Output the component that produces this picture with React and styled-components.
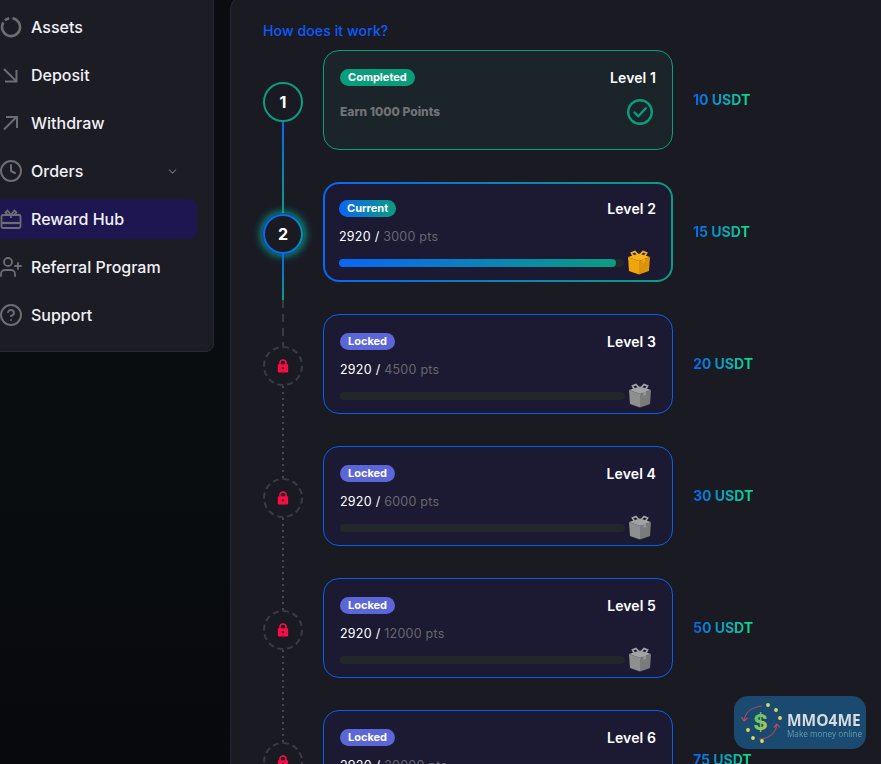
import React from 'react';
import styled, { createGlobalStyle } from 'styled-components';
import { ChevronDown, Clock, UserPlus, CircleHelp } from 'lucide-react';

const GlobalStyle = createGlobalStyle`
  html, body {
    margin: 0;
    height: 100%;
    overflow: hidden;
    background: #090c0f;
    font-family: Inter, "Liberation Sans", sans-serif;
  }
  * { box-sizing: border-box; }
`;

const Page = styled.div`
  display: flex;
  align-items: flex-start;
  gap: 16px;
  height: 764px;
  overflow: hidden;
  background: linear-gradient(180deg, #0a0c0f 0%, #0a0d10 60%, #07090c 100%);
`;

const Sidebar = styled.nav`
  flex: none;
  width: 230px;
  margin: -14px 0 0 -16px;
  padding: 16px 16px 16px 0;
  background: #1b1c24;
  border: 1px solid #272836;
  border-radius: 8px;
`;

const NavItem = styled.div`
  display: flex;
  align-items: center;
  gap: 8px;
  height: 40px;
  margin-top: ${({ $first }) => ($first ? '4px' : '8px')};
  padding: 0 16px 0 14px;
  border-radius: 0 8px 8px 0;
  background: ${({ $active }) => ($active ? '#1d1650' : 'transparent')};
  color: #f1f1f6;
  font-size: 16px;
  font-weight: 500;
  svg { flex: none; color: #6c6d72; }
`;

const NavLabel = styled.span`
  flex: 1;
`;

const Caret = styled(ChevronDown)`
  margin-right: 2px;
`;

const Panel = styled.main`
  flex: none;
  width: 680px;
  height: 900px;
  margin-top: -6px;
  padding: 26px 0 0 32px;
  background: #1a1a23;
  border: 1px solid #262735;
  border-right: 0;
  border-radius: 16px 0 0 0;
`;

const HowLink = styled.a`
  display: block;
  height: 20px;
  margin-bottom: 9px;
  color: #0a5cff;
  font-size: 14px;
  font-weight: 500;
  line-height: 20px;
  letter-spacing: 0.12px;
`;

const Row = styled.div`
  display: flex;
  align-items: flex-start;
  gap: 20px;
  height: 132px;
`;

/* taller than the row: the connector runs down to the next step's circle */
const StepCol = styled.div`
  display: flex;
  flex-direction: column;
  align-items: center;
  flex: none;
  width: 40px;
  height: 164px;
  padding-top: 32px;
`;

const Circle = styled.div`
  display: flex;
  align-items: center;
  justify-content: center;
  flex: none;
  width: 40px;
  height: 40px;
  border-radius: 50%;
  color: #fff;
  font-size: 16px;
  font-weight: 700;
  background: ${({ $kind }) =>
    $kind === 'current'
      ? 'linear-gradient(#1a1a23, #1a1a23) padding-box, linear-gradient(90deg, #0a66f5, #0a70e0 70%, #0a9d90) border-box'
      : '#1a1a23'};
  border: ${({ $kind }) =>
    $kind === 'done' ? '2px solid #0a9d80' : $kind === 'current' ? '2px solid transparent' : '2px dashed #3a3b42'};
  box-shadow: ${({ $kind }) =>
    $kind === 'current' ? '0 0 0 1px #0a4a90, 0 0 8px 2px #08a891' : 'none'};
`;

const Solid = styled.div`
  flex: 1;
  width: 2px;
  background: linear-gradient(180deg, #0a66ee 0%, #0a9d80 100%);
`;

const Dashed = styled.div`
  flex: 1;
  width: 2px;
  background: repeating-linear-gradient(180deg, #3a3b42 0 8px, transparent 8px 14px);
`;

const Dotted = styled.div`
  flex: 1;
  width: 2px;
  background: repeating-linear-gradient(180deg, #45464d 0 2px, transparent 2px 6px);
`;

const Card = styled.div`
  flex: none;
  width: 350px;
  height: 100px;
  border-radius: 16px;
  padding: ${({ $kind }) => ($kind === 'current' ? '16px 14px 0' : '18px 15px 0 16px')};
  border: ${({ $kind }) => ($kind === 'current' ? '2px solid transparent' : '1px solid')};
  border-color: ${({ $kind }) => ($kind === 'done' ? '#0a9d80' : $kind === 'locked' ? '#0a5fe6' : 'transparent')};
  background: ${({ $kind }) =>
    $kind === 'done'
      ? '#1b2429'
      : $kind === 'current'
        ? 'linear-gradient(#1c1a33, #1c1a33) padding-box, linear-gradient(90deg, #0a66f5, #0a9d80) border-box'
        : '#1c1a33'};
`;

const CardTop = styled.div`
  display: flex;
  align-items: center;
  justify-content: space-between;
  height: 17px;
`;

const Badge = styled.span`
  padding: 0 8px;
  border-radius: 9px;
  color: #fff;
  font-size: 11px;
  font-weight: 700;
  line-height: 17px;
  background: ${({ $kind }) =>
    $kind === 'done' ? '#0a9d7b' : $kind === 'current' ? 'linear-gradient(90deg, #0a66f5, #0a9d80)' : '#5b66d9'};
`;

const Level = styled.span`
  margin-right: 1px;
  color: #fff;
  font-size: 14px;
  font-weight: 600;
  letter-spacing: 0.1px;
`;

const EarnRow = styled.div`
  display: flex;
  align-items: center;
  justify-content: space-between;
  margin-top: 13px;
  padding-right: 4px;
  color: #6f7378;
  font-size: 12px;
  font-weight: 800;
  span { margin-top: -2px; }
`;

const Points = styled.div`
  margin-top: 12px;
  color: #fff;
  font-size: 12.5px;
  font-weight: 400;
  line-height: 16px;
  letter-spacing: 0.25px;
  span {
    color: #66676e;
  }
`;

const BarRow = styled.div`
  display: flex;
  align-items: center;
  gap: 3px;
  height: 25px;
  margin-top: 5px;
`;

const Track = styled.div`
  flex: none;
  width: 285px;
  height: 8px;
  border-radius: 4px;
  background: #22272c;
`;

const Fill = styled.div`
  height: 100%;
  border-radius: 4px;
  background: linear-gradient(90deg, #0a66f5, #0a9d80);
`;

const Reward = styled.div`
  height: 100px;
  line-height: 100px;
  font-size: 14px;
  font-weight: 700;
  background: linear-gradient(90deg, #0a62f0, #0ae08a);
  -webkit-background-clip: text;
  background-clip: text;
  color: transparent;
  white-space: nowrap;
`;

const LogoBadge = styled.div`
  position: fixed;
  left: 734px;
  top: 696px;
  display: flex;
  align-items: center;
  gap: 3px;
  width: 132px;
  height: 53px;
  padding-left: 4px;
  border-radius: 14px;
  background: #1a4a70;
  svg { flex: none; }
`;

const LogoText = styled.div`
  display: flex;
  flex-direction: column;
  padding-top: 5px;
  color: #d5dce2;
  font-family: "Open Sans", Inter, sans-serif;
  font-size: 15.5px;
  font-weight: 700;
  line-height: 16px;
  white-space: nowrap;
  small {
    color: #5f9cab;
    font-size: 8.2px;
    font-weight: 400;
    line-height: 11px;
  }
`;

const AssetsIcon = () => (
  <svg width="24" height="24" viewBox="-1 -1 24 24" fill="none" stroke="currentColor" strokeWidth="2.6">
    <path d="M12.5 2.2a9 9 0 1 1-9.2 4.300" />
    <path d="M4.800 4.400a9 9 0 0 1 4.400-2.200" />
  </svg>
);

const ArrowIn = () => (
  <svg width="24" height="24" viewBox="-1 -1 24 24" fill="none" stroke="currentColor" strokeWidth="2">
    <path d="M4 5 16 17M16.500 6v11.500H5" />
  </svg>
);

const ArrowOut = () => (
  <svg width="24" height="24" viewBox="-1 -1 24 24" fill="none" stroke="currentColor" strokeWidth="2">
    <path d="M4 17.500 16 5.500M6 5h11v11" />
  </svg>
);

const HubIcon = () => (
  <svg width="24" height="24" viewBox="-1 -1 24 24" fill="none" stroke="currentColor" strokeWidth="1.800">
    <rect x="1.500" y="7" width="19" height="13" rx="1.500" />
    <path d="M1.500 15h19" strokeWidth="2.200" />
    <path d="M11 7 7.500 2.500 5.500 4.500 8 7M11 7l3.500-4.500 2 2L14 7M11 7v3" />
  </svg>
);

const CheckIcon = () => (
  <svg width="26" height="26" viewBox="0 0 26 26" fill="none" stroke="#0a9d80" strokeWidth="2.400" strokeLinecap="round" strokeLinejoin="round">
    <circle cx="13" cy="13" r="11.800" />
    <path d="m7.500 13.500 3.800 3.800 7.500-8" />
  </svg>
);

const LockIcon = () => (
  <svg width="12" height="14" viewBox="0 0 14 16">
    <path d="M3.500 7V4.500a3.500 3.500 0 0 1 7 0V7" fill="none" stroke="#ff0a47" strokeWidth="1.800" />
    <rect x="1" y="6" width="12" height="9.500" rx="1.500" fill="#ff0a47" />
    <circle cx="7" cy="10.500" r="1.400" fill="#1a1a23" />
  </svg>
);

const GiftIcon = ({ top, left, right }) => (
  <svg width="24" height="25" viewBox="0 0 24 25">
    <path d="M12 6 8 1.500 4.500 3 6.500 6.500ZM12 6l4-4.500L19.500 3l-2 3.500Z" fill="none" stroke={top} strokeWidth="1.800" />
    <path d="M12 3.500 23 7 12 11 1 7Z" fill={top} />
    <path d="M1 7l11 4v13.500L2 21Z" fill={left} />
    <path d="M23 7l-11 4v13.500L22 21Z" fill={right} />
    <path d="M8 5 18 9v3l-2.500 1V9.800L5.500 6Z" fill={top} opacity="0.7" />
  </svg>
);

const LogoMark = () => (
  <svg width="46" height="46" viewBox="0 0 46 46" fill="none">
    <defs>
      <linearGradient id="dollar" x1="0" y1="0" x2="1" y2="1">
        <stop offset="0" stopColor="#3fbf6c" />
        <stop offset="1" stopColor="#c9cc4a" />
      </linearGradient>
    </defs>
    <path d="M6 21C7 13 13 7 24 6" stroke="#a8475f" strokeWidth="1.200" />
    <path d="M6 21l-2.500-4M6 21l3.500-3" stroke="#c9445c" strokeWidth="1.200" />
    <path d="M39 24c-1 9-8 15-18 15" stroke="#a8475f" strokeWidth="1.200" />
    <path d="M39 24l-3 3.500M39 24l2.500 3.500" stroke="#c9445c" strokeWidth="1.200" />
    <text x="22.500" y="30" textAnchor="middle" fontFamily="Inter, sans-serif" fontSize="22" fontWeight="700" fill="url(#dollar)">$</text>
    {[[30, 5], [38, 10], [42, 18], [10, 30], [15, 38], [24, 41]].map(([x, y]) => (
      <circle key={`${x}-${y}`} cx={x} cy={y} r="1.900" fill="#e6d65c" />
    ))}
  </svg>
);

const navItems = [
  { label: 'Assets', icon: <AssetsIcon /> },
  { label: 'Deposit', icon: <ArrowIn /> },
  { label: 'Withdraw', icon: <ArrowOut /> },
  { label: 'Orders', icon: <Clock size={24} strokeWidth={2} />, caret: true },
  { label: 'Reward Hub', icon: <HubIcon />, active: true },
  { label: 'Referral Program', icon: <UserPlus size={24} strokeWidth={1.800} /> },
  { label: 'Support', icon: <CircleHelp size={24} strokeWidth={2} /> },
];

const levels = [
  { n: 1, kind: 'done', usdt: 10 },
  { n: 2, kind: 'current', goal: 3000, usdt: 15 },
  { n: 3, kind: 'locked', goal: 4500, usdt: 20 },
  { n: 4, kind: 'locked', goal: 6000, usdt: 30 },
  { n: 5, kind: 'locked', goal: 12000, usdt: 50 },
  { n: 6, kind: 'locked', goal: 20000, usdt: 75 },
];

const badgeText = { done: 'Completed', current: 'Current', locked: 'Locked' };

const Step = ({ n, kind }) => (
  <StepCol>
    <Circle $kind={kind}>{kind === 'locked' ? <LockIcon /> : n}</Circle>
    {kind === 'done' && <Solid />}
    {kind === 'current' && (
      <>
        <Solid />
        <Dashed />
      </>
    )}
    {kind === 'locked' && <Dotted />}
  </StepCol>
);

const LevelCard = ({ n, kind, goal }) => (
  <Card $kind={kind}>
    <CardTop>
      <Badge $kind={kind}>{badgeText[kind]}</Badge>
      <Level>Level {n}</Level>
    </CardTop>
    {kind === 'done' ? (
      <EarnRow>
        <span>Earn 1000 Points</span>
        <CheckIcon />
      </EarnRow>
    ) : (
      <>
        <Points>
          2920 / <span>{goal} pts</span>
        </Points>
        <BarRow>
          <Track>
            {kind === 'current' && <Fill style={{ width: `${(2920 / goal) * 100}%` }} />}
          </Track>
          {kind === 'current' ? (
            <GiftIcon top="#f7b21a" left="#f0a50c" right="#dc930a" />
          ) : (
            <GiftIcon top="#a2a2a2" left="#8f8f8f" right="#7b7b7b" />
          )}
        </BarRow>
      </>
    )}
  </Card>
);

export default function App() {
  return (
    <Page>
      <GlobalStyle />
      <Sidebar>
        {navItems.map((item, i) => (
          <NavItem key={item.label} $first={i === 0} $active={item.active}>
            {item.icon}
            <NavLabel>{item.label}</NavLabel>
            {item.caret && <Caret size={13} />}
          </NavItem>
        ))}
      </Sidebar>
      <Panel>
        <HowLink>How does it work?</HowLink>
        {levels.map((lvl) => (
          <Row key={lvl.n}>
            <Step n={lvl.n} kind={lvl.kind} />
            <LevelCard {...lvl} />
            <Reward>{lvl.usdt} USDT</Reward>
          </Row>
        ))}
      </Panel>
      <LogoBadge>
        <LogoMark />
        <LogoText>
          MMO4ME
          <small>Make money online</small>
        </LogoText>
      </LogoBadge>
    </Page>
  );
}
